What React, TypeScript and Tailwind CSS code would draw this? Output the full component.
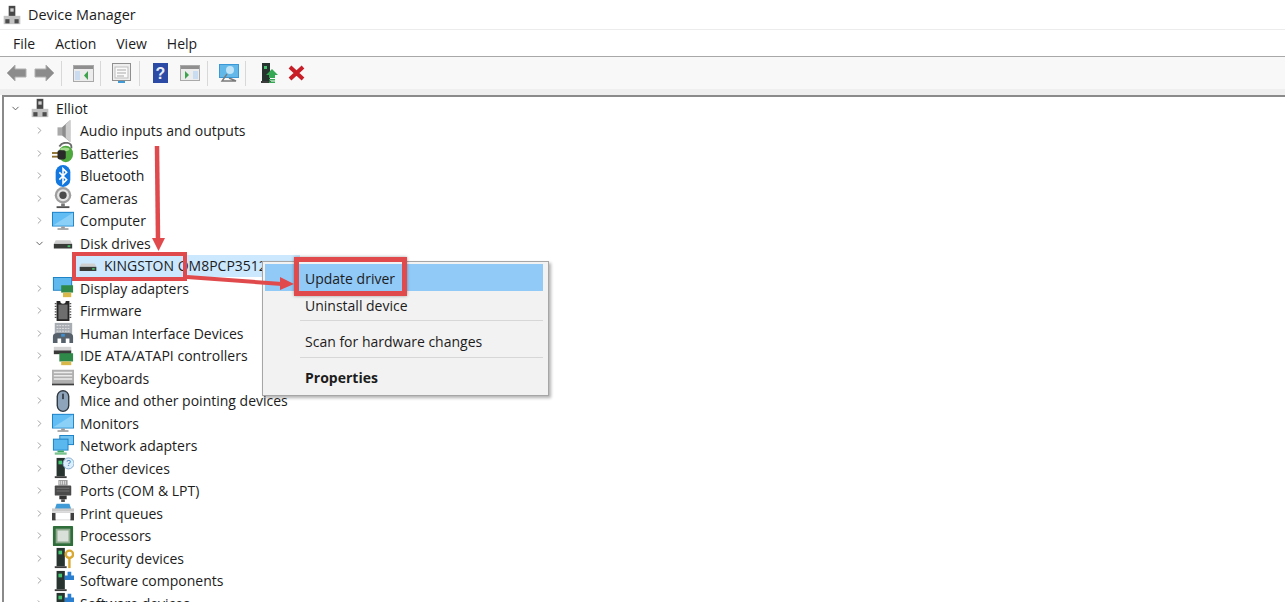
import React from 'react';
import { ChevronDown, ChevronRight } from 'lucide-react';

const font = { fontFamily: '"Open Sans", "Noto Sans", sans-serif' };

/* small device icons, all on a 24 unit box */
const Tower = () => (
  <g>
    <rect x="5" y="1" width="9" height="20" fill="#26332e" />
    <rect x="7" y="4" width="4" height="4" fill="#45c46f" />
    <rect x="3" y="21" width="13" height="2" fill="#3d3d3d" />
  </g>
);

const icons: Record<string, React.ReactNode> = {
  computer: (
    <g>
      <rect x="8" y="1" width="8" height="13" fill="#484848" />
      <rect x="10" y="4" width="4" height="4" fill="#cfcfcf" />
      <rect x="2" y="13" width="20" height="10" fill="#c2c2c2" />
      <rect x="4" y="17" width="5" height="5" fill="#4d4d4d" />
      <rect x="15" y="17" width="5" height="5" fill="#4d4d4d" />
    </g>
  ),
  audio: (
    <g>
      <rect x="6" y="8" width="5" height="9" fill="#a9a9a9" />
      <path d="M11 8 L20 0 V24 L11 17 Z" fill="#8c8c8c" />
      <path d="M15 5 L20 0 V24 L15 20 Z" fill="#cdcdcd" />
    </g>
  ),
  battery: (
    <g>
      <path d="M8 5 Q11 0 17 1 Q22 2 21 7" fill="none" stroke="#6b6b6b" strokeWidth="2" />
      <ellipse cx="15" cy="13" rx="8" ry="9" fill="#4fa83e" />
      <ellipse cx="14" cy="8" rx="5" ry="2" fill="#a6dc8f" />
      <rect x="0" y="11" width="7" height="2" fill="#8a6d2a" />
      <rect x="0" y="15" width="7" height="2" fill="#8a6d2a" />
      <rect x="6" y="9" width="9" height="10" rx="2" fill="#2a2a2a" />
    </g>
  ),
  bluetooth: (
    <g>
      <rect x="4" y="0" width="16" height="24" rx="8" fill="#1278e0" />
      <path d="M8 8 L16 16 L12 20 V4 L16 8 L8 16" fill="none" stroke="#fff" strokeWidth="1.7" />
    </g>
  ),
  camera: (
    <g>
      <circle cx="12" cy="9" r="9" fill="#9e9e9e" />
      <circle cx="12" cy="9" r="6.5" fill="#e4e4e4" />
      <circle cx="12" cy="9" r="4" fill="#4a4a4a" />
      <rect x="10" y="18" width="4" height="3" fill="#777" />
      <rect x="5" y="21" width="14" height="2" fill="#4f4f4f" />
    </g>
  ),
  monitor: (
    <g>
      <rect x="0" y="2" width="24" height="16" fill="#1a7fc4" />
      <rect x="1" y="3" width="22" height="14" fill="#62bdf4" />
      <path d="M1 17 L23 3 V17 Z" fill="#8ad0f7" />
      <rect x="10" y="18" width="4" height="2" fill="#9a9a9a" />
      <rect x="6" y="20" width="12" height="1.5" fill="#8a8a8a" />
    </g>
  ),
  disk: (
    <g>
      <path d="M4 9 H20 L22 13 H2 Z" fill="#cfcfcf" />
      <rect x="2" y="13" width="20" height="5" fill="#383b38" />
      <rect x="17" y="14.5" width="3" height="2" fill="#49c16b" />
    </g>
  ),
  display: (
    <g>
      <rect x="1" y="0" width="21" height="15" fill="#1a7fc4" />
      <rect x="2" y="1" width="19" height="13" fill="#5fb9ef" />
      <rect x="10" y="9" width="13" height="8" fill="#2f8a4a" />
      <rect x="12" y="17" width="9" height="5" fill="#d9b84a" />
    </g>
  ),
  firmware: (
    <g>
      <path d="M5 1 H9 A3 3 0 0 0 15 1 H19 V23 H5 Z" fill="#262626" />
      <rect x="7" y="5" width="10" height="16" fill="#6e6e6e" />
      <path d="M3 4 H5 M3 7 H5 M3 10 H5 M3 13 H5 M3 16 H5 M3 19 H5 M19 4 H21 M19 7 H21 M19 10 H21 M19 13 H21 M19 16 H21 M19 19 H21" stroke="#555" strokeWidth="1.5" />
    </g>
  ),
  hid: (
    <g>
      <rect x="3" y="1" width="19" height="12" fill="#a8adb3" />
      <path d="M5 4 H20 M5 7 H20 M5 10 H20" stroke="#e8e8e8" strokeDasharray="2 1" />
      <path d="M1 23 V16 Q1 12 6 12 H18 Q23 12 23 16 V23 H19 V18 H15 V23 H10 V18 H6 V23 Z" fill="#56616c" />
      <rect x="10" y="13" width="4" height="3" fill="#3f8fd0" />
    </g>
  ),
  ide: (
    <g>
      <path d="M2 2 H21 V7 H2 Z" fill="#d4d4d4" />
      <rect x="2" y="6" width="19" height="4" fill="#3a3a3a" />
      <rect x="8" y="9" width="15" height="9" fill="#2f8a4a" />
      <rect x="10" y="18" width="11" height="4" fill="#d9b84a" />
    </g>
  ),
  keyboard: (
    <g>
      <rect x="0" y="3" width="24" height="15" fill="#b0b0b0" />
      <path d="M2 6 H22 M2 9.5 H22 M2 13 H22" stroke="#ebebeb" strokeWidth="1.6" />
      <rect x="0" y="18" width="24" height="2" fill="#3f3f3f" />
    </g>
  ),
  mouse: (
    <g>
      <rect x="5" y="0" width="14" height="24" rx="7" fill="#2f3740" />
      <rect x="6.5" y="1.5" width="11" height="21" rx="5.5" fill="#8ea4ba" />
      <rect x="11" y="4" width="2" height="6" fill="#38424c" />
    </g>
  ),
  network: (
    <g>
      <rect x="8" y="0" width="16" height="11" fill="#1a7fc4" />
      <rect x="9" y="1" width="14" height="9" fill="#74c4f2" />
      <rect x="1" y="4" width="17" height="13" fill="#1a7fc4" />
      <rect x="2" y="5" width="15" height="11" fill="#5bb8ee" />
      <rect x="6" y="17" width="7" height="2" fill="#3aa860" />
      <rect x="3" y="19" width="13" height="2.5" fill="#7ac48f" />
    </g>
  ),
  other: (
    <g>
      <Tower />
      <circle cx="18" cy="7" r="6" fill="#dceefb" stroke="#7fa8cc" />
      <text x="18" y="10" textAnchor="middle" fontSize="9" fill="#2f6fb0" fontFamily="Liberation Sans">?</text>
    </g>
  ),
  port: (
    <g>
      <rect x="7" y="0" width="10" height="6" fill="#9a9a9a" />
      <path d="M8.5 1 V5 M10.5 1 V5 M12.5 1 V5 M14.5 1 V5" stroke="#eee" strokeWidth="0.9" />
      <rect x="3" y="6" width="18" height="11" rx="1" fill="#4a4a4a" />
      <path d="M5 9 H19 M5 12 H19" stroke="#777" />
      <rect x="8" y="17" width="8" height="4" fill="#333" />
      <rect x="10" y="21" width="4" height="3" fill="#555" />
    </g>
  ),
  printer: (
    <g>
      <path d="M5 2 H19 L21 8 H3 Z" fill="#3f9ad6" />
      <rect x="0" y="7" width="24" height="3" fill="#c9c9c9" />
      <rect x="0" y="10" width="24" height="10" fill="#d8d8d8" />
      <rect x="0" y="12" width="4" height="8" fill="#3f3f3f" />
      <rect x="20" y="12" width="4" height="8" fill="#3f3f3f" />
      <rect x="4" y="12" width="16" height="7" fill="#fff" />
    </g>
  ),
  cpu: (
    <g>
      <rect x="1" y="1" width="22" height="22" rx="1" fill="#2f6e3a" />
      <rect x="4" y="4" width="16" height="16" fill="#8da88c" />
      <rect x="6" y="6" width="12" height="12" fill="#d9dfd9" />
    </g>
  ),
  security: (
    <g>
      <Tower />
      <circle cx="19" cy="8" r="4" fill="none" stroke="#d9a832" strokeWidth="2.6" />
      <path d="M19 12 V23" stroke="#d9a832" strokeWidth="2.6" />
    </g>
  ),
  software: (
    <g>
      <Tower />
      <path d="M14 6 H17 V2 H21 V6 H24 V11 H14 Z" fill="#2b7fd0" />
    </g>
  ),
};

const Icon = ({ name, size = 22 }: { name: string; size?: number }) => (
  <svg width={size} height={size} viewBox="0 0 24 24" className="shrink-0">
    {icons[name]}
  </svg>
);

const tree = [
  ['Audio inputs and outputs', 'audio'],
  ['Batteries', 'battery'],
  ['Bluetooth', 'bluetooth'],
  ['Cameras', 'camera'],
  ['Computer', 'monitor'],
  ['Disk drives', 'disk'],
  ['KINGSTON OM8PCP3512', 'disk'],
  ['Display adapters', 'display'],
  ['Firmware', 'firmware'],
  ['Human Interface Devices', 'hid'],
  ['IDE ATA/ATAPI controllers', 'ide'],
  ['Keyboards', 'keyboard'],
  ['Mice and other pointing devices', 'mouse'],
  ['Monitors', 'monitor'],
  ['Network adapters', 'network'],
  ['Other devices', 'other'],
  ['Ports (COM & LPT)', 'port'],
  ['Print queues', 'printer'],
  ['Processors', 'cpu'],
  ['Security devices', 'security'],
  ['Software components', 'software'],
  ['Software devices', 'software'],
];

const Toolbar = () => (
  <div className="bg-[#f8f8f8]">
    <div className="flex h-[32px] items-center pl-[6px]">
      <svg width="21" height="18" viewBox="0 0 21 18">
        <path d="M1 9 L9 1 V5 H20 V13 H9 V17 Z" fill="#8c8c8c" stroke="#b0b0b0" />
      </svg>
      <svg width="21" height="18" viewBox="0 0 21 18" className="ml-[7px]">
        <path d="M20 9 L12 1 V5 H1 V13 H12 V17 Z" fill="#8c8c8c" stroke="#b0b0b0" />
      </svg>
      <div className="ml-[6px] h-[25px] w-px bg-[#d8d8d8]" />
      <svg width="21" height="17" viewBox="0 0 21 17" className="ml-[11px]">
        <rect x="0.5" y="0.5" width="20" height="16" fill="#ececec" stroke="#a9a9a9" />
        <rect x="1" y="1" width="19" height="3" fill="#8f8f8f" />
        <rect x="2" y="6" width="5" height="9" fill="#c9dcf0" />
        <path d="M15 6 L11 10.5 L15 15 Z" fill="#3fa34d" />
      </svg>
      <div className="ml-[6px] h-[25px] w-px bg-[#d8d8d8]" />
      <svg width="19" height="20" viewBox="0 0 19 20" className="ml-[11px]">
        <rect x="0.5" y="0.5" width="18" height="17" fill="#eee" stroke="#8f8f8f" />
        <rect x="3" y="4" width="13" height="11" fill="#fafafa" stroke="#bdbdbd" />
        <path d="M5 7 H14 M5 10 H14 M5 13 H12" stroke="#a9a9a9" />
        <rect x="6" y="18" width="7" height="2" fill="#3f9ad6" />
      </svg>
      <div className="ml-[8px] h-[25px] w-px bg-[#d8d8d8]" />
      <svg width="15" height="20" viewBox="0 0 15 20" className="ml-[13px]">
        <rect width="15" height="20" fill="#2a4aa6" />
        <text x="7.5" y="16" textAnchor="middle" fontSize="16" fontWeight="700" fill="#e8ecf7" fontFamily="Liberation Sans">?</text>
      </svg>
      <svg width="20" height="16" viewBox="0 0 20 16" className="ml-[12px]">
        <rect x="0.5" y="0.5" width="19" height="15" fill="#ececec" stroke="#a9a9a9" />
        <rect x="1" y="1" width="18" height="3" fill="#8f8f8f" />
        <path d="M5 6 L9 10 L5 14 Z" fill="#3fa34d" />
        <rect x="13" y="6" width="5" height="8" fill="#c9dcf0" />
      </svg>
      <div className="ml-[7px] h-[25px] w-px bg-[#d8d8d8]" />
      <svg width="20" height="19" viewBox="0 0 20 19" className="ml-[11px]">
        <rect x="0.5" y="0.5" width="19" height="13" fill="#63b8ea" stroke="#3a98d6" />
        <circle cx="11" cy="6" r="4" fill="#bfe3f7" />
        <path d="M8 10 L3 17 H17 L10 14" fill="none" stroke="#7a7a7a" strokeWidth="1.4" />
      </svg>
      <div className="ml-[6px] h-[25px] w-px bg-[#d8d8d8]" />
      <svg width="17" height="21" viewBox="0 0 17 21" className="ml-[15px]">
        <rect x="1" y="0" width="8" height="18" fill="#26332e" />
        <rect x="3" y="3" width="3" height="3" fill="#45c46f" />
        <rect x="0" y="18" width="10" height="2" fill="#3d3d3d" />
        <path d="M11 6 L17 12 H14 V15 H8 V12 H5 Z" fill="#35a853" />
        <rect x="8" y="16" width="6" height="1.5" fill="#35a853" />
        <rect x="8" y="18.5" width="6" height="1.5" fill="#35a853" />
      </svg>
      <svg width="17" height="16" viewBox="0 0 17 16" className="ml-[10px]">
        <path d="M2 2 L15 14 M15 2 L2 14" stroke="#c81e28" strokeWidth="4" />
      </svg>
    </div>
    <div className="h-[6px] bg-[#efefef]" />
  </div>
);

export default function App() {
  return (
    <div className="relative h-[602px] w-[1285px] overflow-hidden bg-white text-[14px] text-[#1c1c1c]" style={font}>
      {/* Title */}
      <div className="flex h-[29px] items-center pl-[2px]">
        <Icon name="computer" size={20} />
        <span className="ml-[6px] text-[14.4px]">Device Manager</span>
      </div>
      {/* Menu */}
      <div className="flex h-[28px] items-center gap-[20px] border-t border-b border-t-[#ececec] border-b-[#a8a8a8] pl-[13px]">
        <span>File</span>
        <span>Action</span>
        <span>View</span>
        <span>Help</span>
      </div>
      <Toolbar />
      {/* Tree */}
      <div className="ml-[2px] border-t-[2px] border-l-[2px] border-[#8a8a8a]">
        <div className="flex h-[22.5px] items-center">
          <ChevronDown size={11} className="ml-[6px] text-[#555]" />
          <span className="ml-[9px]"><Icon name="computer" size={20} /></span>
          <span className="ml-[6px]">Elliot</span>
        </div>
        {tree.map(([label, icon]) => {
          const child = label.startsWith('KINGSTON');
          const open = label === 'Disk drives';
          return (
            <div key={label} className="flex h-[22.5px] items-center pl-[30px]">
              {child ? (
                <div className="ml-[38px] flex h-[22.5px] w-[228px] items-center bg-[#cce8ff]">
                  <span className="ml-[6px]"><Icon name={icon} size={20} /></span>
                  <span className="ml-[6px] whitespace-nowrap">{label}</span>
                </div>
              ) : (
                <>
                  {open ? (
                    <ChevronDown size={11} className="text-[#555]" />
                  ) : (
                    <ChevronRight size={11} className="text-[#999]" />
                  )}
                  <span className="ml-[7px]"><Icon name={icon} /></span>
                  <span className="ml-[6px] whitespace-nowrap">{label}</span>
                </>
              )}
            </div>
          );
        })}
      </div>

      {/* Context menu */}
      <div className="absolute top-[261px] left-[262px] h-[135px] w-[287px] border border-[#a6a6a6] bg-[#f2f2f2] pt-[2px] pr-[5px] pl-[2px] shadow-[2px_2px_3px_rgba(0,0,0,0.3)]">
        <div className="flex h-[27px] items-center bg-[#91c9f7] pt-[2px] pl-[40px]">Update driver</div>
        <div className="flex h-[29px] items-center pl-[40px]">Uninstall device</div>
        <div className="ml-[35px] h-px bg-[#d7d7d7]" />
        <div className="flex h-[36px] items-center pt-[4px] pl-[40px]">Scan for hardware changes</div>
        <div className="ml-[35px] h-px bg-[#d7d7d7]" />
        <div className="flex h-[36px] items-center pt-[3px] pl-[40px] font-bold">Properties</div>
      </div>

      {/* Annotations */}
      <div className="absolute top-[252px] left-[72px] h-[29px] w-[115px] border-[4px] border-[#e04a4d]" />
      <div className="absolute top-[257px] left-[294px] h-[39px] w-[113px] border-[5px] border-[#e04a4d] shadow-[0_0_3px_rgba(0,0,0,0.35)]" />
      <svg width="310" height="160" viewBox="0 0 310 160" className="absolute top-[140px] left-0">
        <path d="M157 6 L158 100" stroke="#e04a4d" strokeWidth="4.5" fill="none" />
        <path d="M152 98 H165 L158.5 111 Z" fill="#e04a4d" />
        <path d="M187 137 L282 144" stroke="#e04a4d" strokeWidth="4" fill="none" />
        <path d="M280 137 L294 144 L280 150 Z" fill="#e04a4d" />
      </svg>
    </div>
  );
}
